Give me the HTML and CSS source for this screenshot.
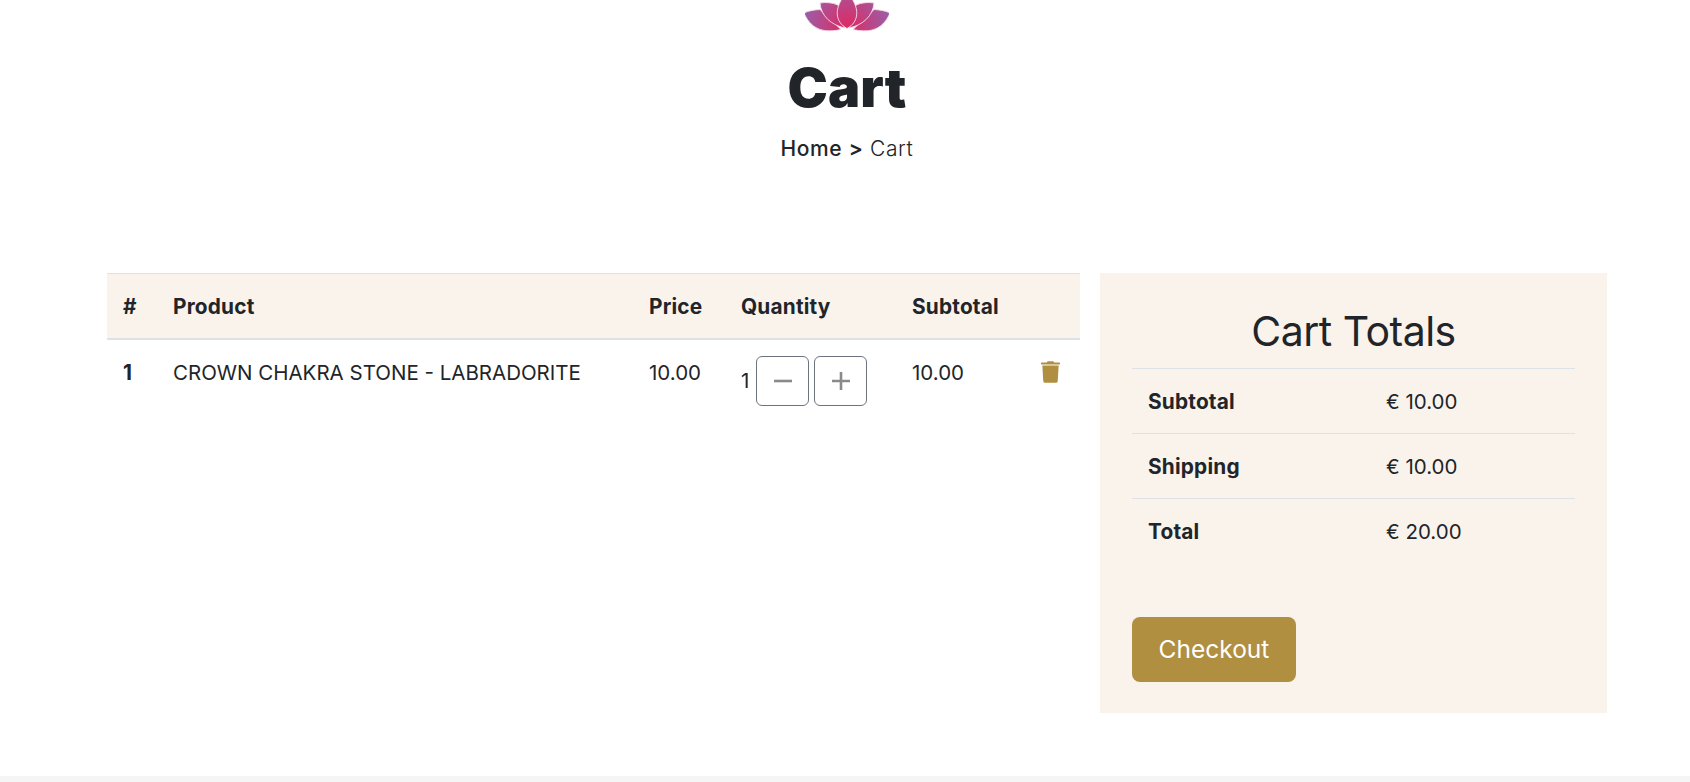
FILE: index.html
```html
<!DOCTYPE html>
<html lang="en">
<head>
  <meta charset="UTF-8" />
  <meta name="viewport" content="width=device-width, initial-scale=1.0"/>
  <title>Cart</title>
  <link rel="stylesheet" href="styles.css">
</head>
<body>
  <header class="hero">
    <!-- lotus logo, cut off by the top of the window -->
    <svg class="logo" viewBox="0 0 84 32" aria-hidden="true">
      <defs>
        <radialGradient id="lotus" gradientUnits="userSpaceOnUse" cx="42" cy="26" r="42">
          <stop offset="0" stop-color="#dc2a66"/>
          <stop offset="0.45" stop-color="#c2407f"/>
          <stop offset="1" stop-color="#9c5ca6"/>
        </radialGradient>
      </defs>
      <g fill="url(#lotus)" stroke="#f6dfe6" stroke-width="0.9">
        <path d="M-1 13C4 10.5 9 10 15 9.5L36 29.5C22 32.5 7 32 -1 13Z"/>
        <path d="M85 13C80 10.5 75 10 69 9.5L48 29.5C62 32.5 77 32 85 13Z"/>
        <path d="M15 3C21 2 27 2.5 33 5L40 28C26 25 16 16 15 3Z"/>
        <path d="M69 3C63 2 57 2.5 51 5L44 28C58 25 68 16 69 3Z"/>
        <path d="M42 28.5C30 22 28 8 42-8C56 8 54 22 42 28.5Z"/>
      </g>
    </svg>
    <h1 class="page-title">Cart</h1>
    <p class="breadcrumb"><a href="#">Home</a> <b>&gt;</b> <span>Cart</span></p>
  </header>

  <main class="cart-layout">
    <section class="cart-items">
      <table class="cart-table">
        <thead>
          <tr>
            <th class="col-num">#</th>
            <th class="col-product">Product</th>
            <th class="col-price">Price</th>
            <th class="col-qty">Quantity</th>
            <th class="col-subtotal">Subtotal</th>
            <th class="col-remove"></th>
          </tr>
        </thead>
        <tbody>
          <tr>
            <th>1</th>
            <td>CROWN CHAKRA STONE - LABRADORITE</td>
            <td>10.00</td>
            <td>
              <div class="qty">
                <span class="qty-value">1</span>
                <button class="qty-btn" type="button" aria-label="Decrease">
                  <svg viewBox="0 0 18 18"><path d="M0 9h18"/></svg>
                </button>
                <button class="qty-btn" type="button" aria-label="Increase">
                  <svg viewBox="0 0 18 18"><path d="M0 9h18M9 0v18"/></svg>
                </button>
              </div>
            </td>
            <td>10.00</td>
            <td>
              <svg class="trash" viewBox="0 0 448 512" aria-label="Remove">
                <path d="M432 32H312l-9.4-18.7A24 24 0 0 0 281.1 0H166.8a23.72 23.72 0 0 0-21.4 13.3L136 32H16A16 16 0 0 0 0 48v16a16 16 0 0 0 16 16h416a16 16 0 0 0 16-16V48a16 16 0 0 0-16-16zM53.2 467a48 48 0 0 0 47.9 45h245.8a48 48 0 0 0 47.9-45L416 104H32z"/>
              </svg>
            </td>
          </tr>
        </tbody>
      </table>
    </section>

    <aside class="totals">
      <h2 class="totals-title">Cart Totals</h2>
      <table class="totals-table">
        <tr>
          <th>Subtotal</th>
          <td>€ 10.00</td>
        </tr>
        <tr>
          <th>Shipping</th>
          <td>€ 10.00</td>
        </tr>
        <tr>
          <th>Total</th>
          <td>€ 20.00</td>
        </tr>
      </table>
      <button class="checkout" type="button">Checkout</button>
    </aside>
  </main>

  <footer class="page-footer"></footer>
</body>
</html>
```

FILE: styles.css
```css
body {
  margin: 0;
  height: 782px;
  overflow: hidden;
  font-family: Inter, "Liberation Sans", sans-serif;
  font-size: 20.5px;
  line-height: 32px;
  color: #212529;
  background-color: #fff;
}

.hero {
  padding-left: 4px;
  text-align: center;
}

.logo {
  display: block;
  width: 84px;
  height: 32px;
  margin: 0 auto;
}

.page-title {
  margin: 20px 0 0;
  font-size: 54px;
  line-height: 72px;
  font-weight: 900;
}

.breadcrumb {
  margin: 8px 0 0;
  font-size: 21px;
  line-height: 33px;
  letter-spacing: 0.6px;
  font-weight: 400;
}

.breadcrumb a {
  color: inherit;
  font-weight: 500;
  text-decoration: none;
}

.breadcrumb b {
  font-weight: 600;
}

.breadcrumb span {
  font-weight: 300;
}

.cart-layout {
  display: flex;
  gap: 20px;
  margin-top: 108px;
  padding: 0 83px 0 107px;
}

.cart-items {
  width: 973px;
}

.totals {
  width: 507px;
  height: 440px;
  padding: 30px 32px 0;
  box-sizing: border-box;
  background-color: #faf3ec;
}

/* tabla izquierda */
.cart-table {
  width: 100%;
  table-layout: fixed;
  border-collapse: collapse;
}

.cart-table thead tr {
  background-color: #faf3ec;
  border-top: 1px solid #dee2e6;
  border-bottom: 2px solid #dee2e6;
}

.cart-table th,
.cart-table td {
  box-sizing: border-box;
  padding: 17px 16px 15px;
  text-align: left;
  vertical-align: top;
  font-weight: 400;
}

.cart-table th {
  font-size: 20.8px;
  letter-spacing: 0.2px;
  font-weight: 700;
}

.col-num { width: 50px; }
.col-product { width: 476px; }
.col-price { width: 92px; }
.col-qty { width: 171px; }
.col-subtotal { width: 129px; }
.col-remove { width: 55px; }

.qty {
  display: flex;
  align-items: center;
  gap: 5px;
  margin-top: -1px;
}

.qty-value {
  width: 10px;
}

.qty-btn {
  display: flex;
  align-items: center;
  justify-content: center;
  width: 53px;
  height: 50px;
  padding: 0;
  background: #fff;
  border: 1px solid #6c757d;
  border-radius: 6px;
}

.qty-btn svg {
  width: 18px;
  height: 18px;
}

.qty-btn path {
  fill: none;
  stroke: #8a8a8a;
  stroke-width: 2.6;
}

.trash {
  display: block;
  width: 19px;
  height: 22px;
  margin-top: 4px;
  fill: #b08f41;
}

/* panel de totales */
.totals-title {
  margin: 0 0 9px;
  text-align: center;
  font-size: 41px;
  line-height: 56px;
  letter-spacing: -0.5px;
  font-weight: 400;
}

.totals-table {
  width: 100%;
  table-layout: fixed;
  border-collapse: collapse;
}

.totals-table tr {
  border-top: 1px solid #dee2e6;
}

.totals-table th,
.totals-table td {
  height: 65px;
  padding: 2px 16px 0;
  box-sizing: border-box;
  text-align: left;
  font-weight: 400;
}

.totals-table th {
  width: 238px;
  font-size: 20.8px;
  letter-spacing: 0.2px;
  font-weight: 700;
}

.checkout {
  display: block;
  width: 164px;
  height: 65px;
  margin-top: 53px;
  padding: 0;
  font-family: inherit;
  font-size: 24.5px;
  color: #fff;
  background-color: #b08f41;
  border: none;
  border-radius: 8px;
}

.page-footer {
  position: fixed;
  left: 0;
  right: 0;
  bottom: 0;
  height: 6px;
  background-color: #f5f5f5;
}
```
